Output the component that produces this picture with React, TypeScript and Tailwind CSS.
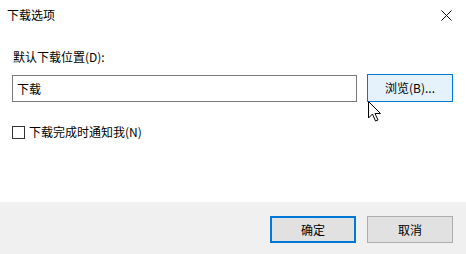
import React from "react";

export default function App() {
  return (
    <div
      className="w-[466px] h-[254px] bg-white flex flex-col text-[12px] text-black overflow-hidden"
      style={{ fontFamily: '"Segoe UI", "Noto Sans CJK SC", sans-serif' }}
    >
      {/* Title bar */}
      <div className="h-[30px] flex items-center justify-between pl-[7px] pr-[12px]">
        <span className="leading-none mt-[-1px]">下载选项</span>
        <svg width="11" height="11" viewBox="0 0 11 11" className="mr-[2px]">
          <path d="M0.5 0.5 L10.5 10.5 M10.5 0.5 L0.5 10.5" stroke="#111" strokeWidth="1" />
        </svg>
      </div>

      {/* Body */}
      <div className="flex-1 px-[12px] pt-[20px]">
        <div className="pl-[1px] leading-[14px]">默认下载位置(D):</div>
        <div className="flex items-start mt-[10px]">
          <div className="w-[345px] h-[27px] mt-[1px] border border-[#7a7a7a] flex items-center pl-[4px]">
            下载
          </div>
          <div className="relative ml-[10px]">
            <button className="w-[86px] h-[28px] border border-[#0078d7] bg-[#e5f1fb] flex items-center justify-center">
              浏览(B)...
            </button>
            <svg
              width="14"
              height="22"
              viewBox="0 0 14 22"
              className="absolute left-[1px] top-[27px]"
            >
              <path
                d="M0.5 0.5 L0.5 17 L4.5 13 L7.5 20 L10 19 L7 12.5 L12.5 12.5 Z"
                fill="white"
                stroke="black"
                strokeWidth="1"
                strokeLinejoin="miter"
              />
            </svg>
          </div>
        </div>
        <div className="flex items-center mt-[23px]">
          <div className="w-[13px] h-[13px] border border-[#333] bg-white" />
          <span className="ml-[4px] leading-[14px]">下载完成时通知我(N)</span>
        </div>
      </div>

      {/* Footer */}
      <div className="h-[52px] bg-[#f0f0f0] border-t border-[#f3f3f3] flex justify-end items-start pt-[13px] pr-[13px] gap-[11px]">
        <button className="w-[86px] h-[27px] border-2 border-[#0078d7] bg-[#e1e1e1] flex items-center justify-center">
          确定
        </button>
        <button className="w-[86px] h-[27px] border border-[#adadad] bg-[#e1e1e1] flex items-center justify-center">
          取消
        </button>
      </div>
    </div>
  );
}
